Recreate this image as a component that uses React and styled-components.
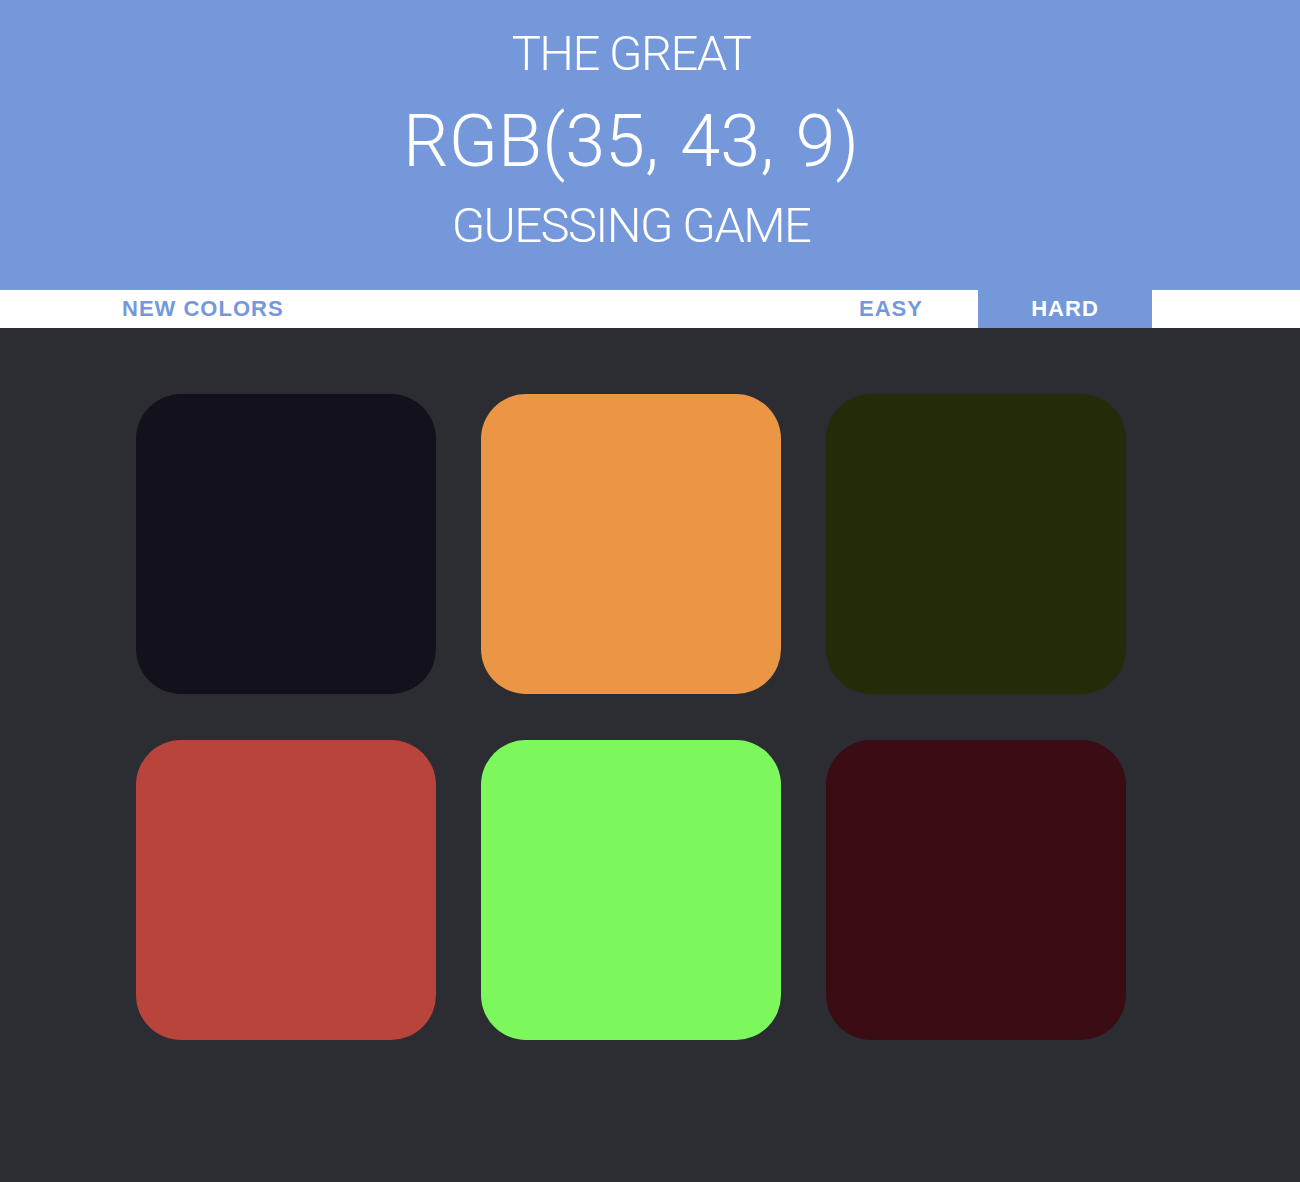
import styled, { createGlobalStyle } from "styled-components";

const BLUE = "#7598db";

const squares = [
  "rgb(19, 17, 28)",
  "rgb(234, 150, 69)",
  "rgb(35, 43, 9)",
  "rgb(184, 68, 60)",
  "rgb(124, 248, 92)",
  "rgb(58, 12, 20)",
];

export default function App() {
  return (
    <>
      <GlobalStyle />
      <Header>
        <TitleLine>The Great</TitleLine>
        <ColorDisplay>RGB(35, 43, 9)</ColorDisplay>
        <TitleLine $gap="14px">Guessing Game</TitleLine>
      </Header>

      <Stripe>
        <NavButton>New Colors</NavButton>
        <Modes>
          <ModeButton>Easy</ModeButton>
          <ModeButton $selected>Hard</ModeButton>
        </Modes>
      </Stripe>

      <Board>
        {squares.map((color, i) => (
          <Square key={i} $color={color} />
        ))}
      </Board>
    </>
  );
}

const GlobalStyle = createGlobalStyle`
  * {
    box-sizing: border-box;
  }

  html, body {
    margin: 0;
    background-color: #2c2d32;
    font-family: "Liberation Sans", Arial, sans-serif;
  }
`;

const Header = styled.header`
  height: 290px;
  padding: 24px 38px 0 0;
  background-color: ${BLUE};
  color: white;
  text-align: center;
  text-transform: uppercase;
  font-family: Roboto, "Liberation Sans", sans-serif;
  font-weight: 300;
`;

const TitleLine = styled.h1`
  margin: ${(p) => p.$gap || "0"} 0 0;
  font-size: 49px;
  line-height: 60px;
  font-weight: 300;
  letter-spacing: -1.6px;
`;

const ColorDisplay = styled.div`
  margin-top: 18px;
  font-size: 72px;
  line-height: 80px;
  letter-spacing: 0;
  word-spacing: 4px;
`;

const Stripe = styled.nav`
  height: 38px;
  display: flex;
  justify-content: space-between;
  padding: 0 148px 0 68px;
  background-color: white;
`;

const NavButton = styled.button`
  height: 100%;
  padding: 0 54px;
  border: none;
  background: transparent;
  color: ${BLUE};
  font-family: inherit;
  font-size: 22px;
  font-weight: 700;
  letter-spacing: 1px;
  text-transform: uppercase;
  cursor: pointer;
`;

const Modes = styled.div`
  display: flex;
`;

const ModeButton = styled(NavButton)`
  width: 174px;
  padding: 0;
  background-color: ${(p) => (p.$selected ? BLUE : "white")};
  color: ${(p) => (p.$selected ? "white" : BLUE)};
`;

const Board = styled.main`
  display: grid;
  grid-template-columns: repeat(3, 300px);
  column-gap: 45px;
  row-gap: 46px;
  padding: 66px 0 142px 136px;
`;

const Square = styled.div`
  width: 300px;
  height: 300px;
  border-radius: 45px;
  background-color: ${(p) => p.$color};
`;
